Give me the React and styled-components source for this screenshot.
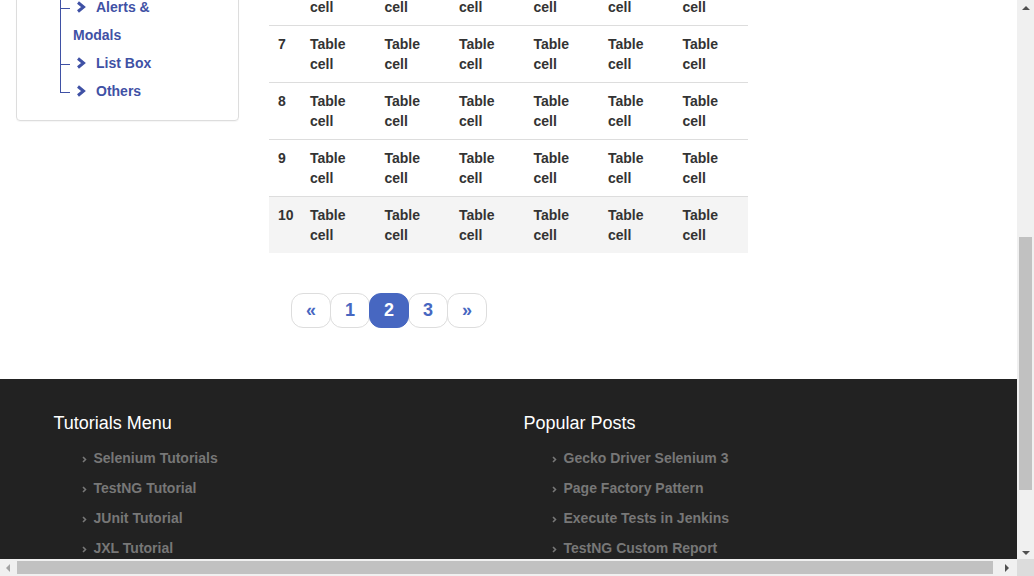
import React from "react";
import styled, { createGlobalStyle } from "styled-components";

const GlobalStyle = createGlobalStyle`
  html, body { margin: 0; padding: 0; overflow: hidden; }
  body { font-family: "Liberation Sans", Arial, sans-serif; background: #fff; }
  * { box-sizing: border-box; }
`;

const Screen = styled.div`
  width: 1034px;
  height: 576px;
  display: flex;
  flex-direction: column;
  overflow: hidden;
`;

const TopRow = styled.div`
  display: flex;
  height: 559px;
`;

const Viewport = styled.div`
  flex: 1;
  height: 559px;
  overflow: hidden;
  display: flex;
  flex-direction: column;
`;

const Main = styled.div`
  display: flex;
  align-items: flex-start;
  gap: 30px;
  padding-left: 16px;
  margin-top: -40px;
`;

const SideCard = styled.div`
  width: 223px;
  border: 1px solid #ddd;
  border-radius: 4px;
  padding: 32px 50px 15px 43px;
  box-shadow: 0 1px 1px rgba(0, 0, 0, 0.04);
`;

const Tree = styled.ul`
  list-style: none;
  margin: 0;
  padding: 0;
`;

const TreeItem = styled.li`
  position: relative;
  padding-left: 13px;
  font-size: 14px;
  font-weight: bold;
  line-height: 28px;
  color: #3f51a5;

  &::before {
    content: "";
    position: absolute;
    left: 0;
    top: 0;
    width: 9px;
    height: 15px;
    border-left: 1px solid #3f51a5;
    border-bottom: 1px solid #3f51a5;
  }

  &::after {
    content: "";
    position: absolute;
    left: 0;
    top: 14px;
    bottom: 0;
    border-left: 1px solid #3f51a5;
    display: ${(p) => (p.$last ? "none" : "block")};
  }
`;

const Chevron = styled.svg`
  width: 10px;
  height: 12px;
  margin-left: 3px;
  margin-right: 10px;
  vertical-align: -1px;
`;

const ContentCol = styled.div`
  display: flex;
  flex-direction: column;
  align-items: flex-start;
  padding-top: 8px;
`;

const Table = styled.table`
  width: 479px;
  table-layout: fixed;
  border-collapse: collapse;
  font-size: 14px;
  font-weight: bold;
  color: #333;
`;

const Row = styled.tr`
  background: ${(p) => (p.$shaded ? "#f4f4f4" : "#fff")};
`;

const Cell = styled.td`
  border-top: 1px solid #ddd;
  padding: 8px 8px 8px 9px;
  line-height: 20px;
  vertical-align: top;
`;

const Pagination = styled.nav`
  display: flex;
  margin: 40px 0 51px 22px;
`;

const PageButton = styled.span`
  width: 40px;
  height: 35px;
  margin-left: ${(p) => (p.$first ? "0" : "-1px")};
  display: flex;
  align-items: center;
  justify-content: center;
  border: 1px solid ${(p) => (p.$active ? "#4767c1" : "#ddd")};
  border-radius: 12px;
  background: ${(p) => (p.$active ? "#4767c1" : "#fff")};
  color: ${(p) => (p.$active ? "#fff" : "#4767c1")};
  font-size: 18px;
  font-weight: bold;
  position: relative;
  z-index: ${(p) => (p.$active ? 2 : 1)};
`;

const Footer = styled.footer`
  background: #222;
  padding-top: 34px;
  flex: 1;
`;

const FooterInner = styled.div`
  width: 940px;
  margin: 0 auto;
  display: grid;
  grid-template-columns: 1fr 1fr;
`;

const FooterCol = styled.div`
  padding: 0 15px;
`;

const FooterTitle = styled.h4`
  margin: 0 0 10px;
  font-size: 18px;
  font-weight: normal;
  line-height: 20px;
  color: #fff;
`;

const FooterList = styled.ul`
  list-style: none;
  margin: 0;
  padding: 0 0 0 28px;
`;

const FooterItem = styled.li`
  display: flex;
  align-items: center;
  line-height: 30px;
  font-size: 14px;
  font-weight: bold;
  color: #777;
`;

const SmallArrow = styled.svg`
  width: 5px;
  height: 7px;
  margin: 3px 7px 0 0;
  flex: none;
`;

const VScroll = styled.div`
  width: 17px;
  height: 559px;
  background: #f0f0f0;
  display: flex;
  flex-direction: column;
`;

const ArrowBox = styled.div`
  width: 17px;
  height: 17px;
  flex: none;
  display: flex;
  align-items: center;
  justify-content: center;
`;

const Tri = styled.span`
  width: 0;
  height: 0;
  ${(p) =>
    p.$dir === "up"
      ? `border-left: 4px solid transparent; border-right: 4px solid transparent; border-bottom: 4px solid #505050; margin-top: -2px;`
      : p.$dir === "down"
      ? `border-left: 4px solid transparent; border-right: 4px solid transparent; border-top: 4px solid #505050; margin-top: 4px;`
      : p.$dir === "left"
      ? `border-top: 4px solid transparent; border-bottom: 4px solid transparent; border-right: 4px solid #a3a3a3; margin-left: -1px;`
      : `border-top: 4px solid transparent; border-bottom: 4px solid transparent; border-left: 4px solid #505050; margin-left: -3px;`}
`;

const VTrack = styled.div`
  flex: 1;
  padding: 0 2px;
`;

const VThumb = styled.div`
  margin-top: 220px;
  height: 253px;
  background: #c1c1c1;
`;

const BottomRow = styled.div`
  display: flex;
  height: 17px;
`;

const HScroll = styled.div`
  flex: 1;
  background: #f0f0f0;
  display: flex;
`;

const HTrack = styled.div`
  flex: 1;
  padding: 2px 0;
`;

const HThumb = styled.div`
  width: 976px;
  height: 13px;
  background: #c1c1c1;
`;

const Corner = styled.div`
  width: 17px;
  background: #dcdcdc;
`;

const ChevronIcon = () => (
  <Chevron viewBox="0 0 10 12">
    <polyline
      points="2,1.5 7.5,6 2,10.5"
      fill="none"
      stroke="#3f51a5"
      strokeWidth="3"
      strokeLinejoin="miter"
    />
  </Chevron>
);

const FooterArrow = () => (
  <SmallArrow viewBox="0 0 5 7">
    <polyline points="1,1 3.5,3.5 1,6" fill="none" stroke="#777" strokeWidth="1.6" />
  </SmallArrow>
);

const treeItems = ["Alerts & Modals", "List Box", "Others"];
const rows = [6, 7, 8, 9, 10];
const cols = [32, 74.5, 74.5, 74.5, 74.5, 74.5, 74.5];

const tutorials = ["Selenium Tutorials", "TestNG Tutorial", "JUnit Tutorial", "JXL Tutorial"];
const posts = ["Gecko Driver Selenium 3", "Page Factory Pattern", "Execute Tests in Jenkins", "TestNG Custom Report"];

export default function App() {
  return (
    <>
      <GlobalStyle />
      <Screen>
        <TopRow>
          <Viewport>
            <Main>
              <SideCard>
                <Tree>
                  {treeItems.map((t, i) => (
                    <TreeItem key={t} $last={i === treeItems.length - 1}>
                      <ChevronIcon />
                      {t}
                    </TreeItem>
                  ))}
                </Tree>
              </SideCard>
              <ContentCol>
                <Table>
                  <colgroup>
                    {cols.map((w, i) => (
                      <col key={i} style={{ width: w }} />
                    ))}
                  </colgroup>
                  <tbody>
                    {rows.map((r) => (
                      <Row key={r} $shaded={r === 10}>
                        <Cell>{r}</Cell>
                        {[0, 1, 2, 3, 4, 5].map((c) => (
                          <Cell key={c}>Table cell</Cell>
                        ))}
                      </Row>
                    ))}
                  </tbody>
                </Table>
                <Pagination>
                  <PageButton $first>«</PageButton>
                  <PageButton>1</PageButton>
                  <PageButton $active>2</PageButton>
                  <PageButton>3</PageButton>
                  <PageButton>»</PageButton>
                </Pagination>
              </ContentCol>
            </Main>
            <Footer>
              <FooterInner>
                <FooterCol>
                  <FooterTitle>Tutorials Menu</FooterTitle>
                  <FooterList>
                    {tutorials.map((t) => (
                      <FooterItem key={t}>
                        <FooterArrow />
                        {t}
                      </FooterItem>
                    ))}
                  </FooterList>
                </FooterCol>
                <FooterCol>
                  <FooterTitle>Popular Posts</FooterTitle>
                  <FooterList>
                    {posts.map((t) => (
                      <FooterItem key={t}>
                        <FooterArrow />
                        {t}
                      </FooterItem>
                    ))}
                  </FooterList>
                </FooterCol>
              </FooterInner>
            </Footer>
          </Viewport>
          <VScroll>
            <ArrowBox>
              <Tri $dir="up" />
            </ArrowBox>
            <VTrack>
              <VThumb />
            </VTrack>
            <ArrowBox>
              <Tri $dir="down" />
            </ArrowBox>
          </VScroll>
        </TopRow>
        <BottomRow>
          <HScroll>
            <ArrowBox>
              <Tri $dir="left" />
            </ArrowBox>
            <HTrack>
              <HThumb />
            </HTrack>
            <ArrowBox>
              <Tri $dir="right" />
            </ArrowBox>
          </HScroll>
          <Corner />
        </BottomRow>
      </Screen>
    </>
  );
}
